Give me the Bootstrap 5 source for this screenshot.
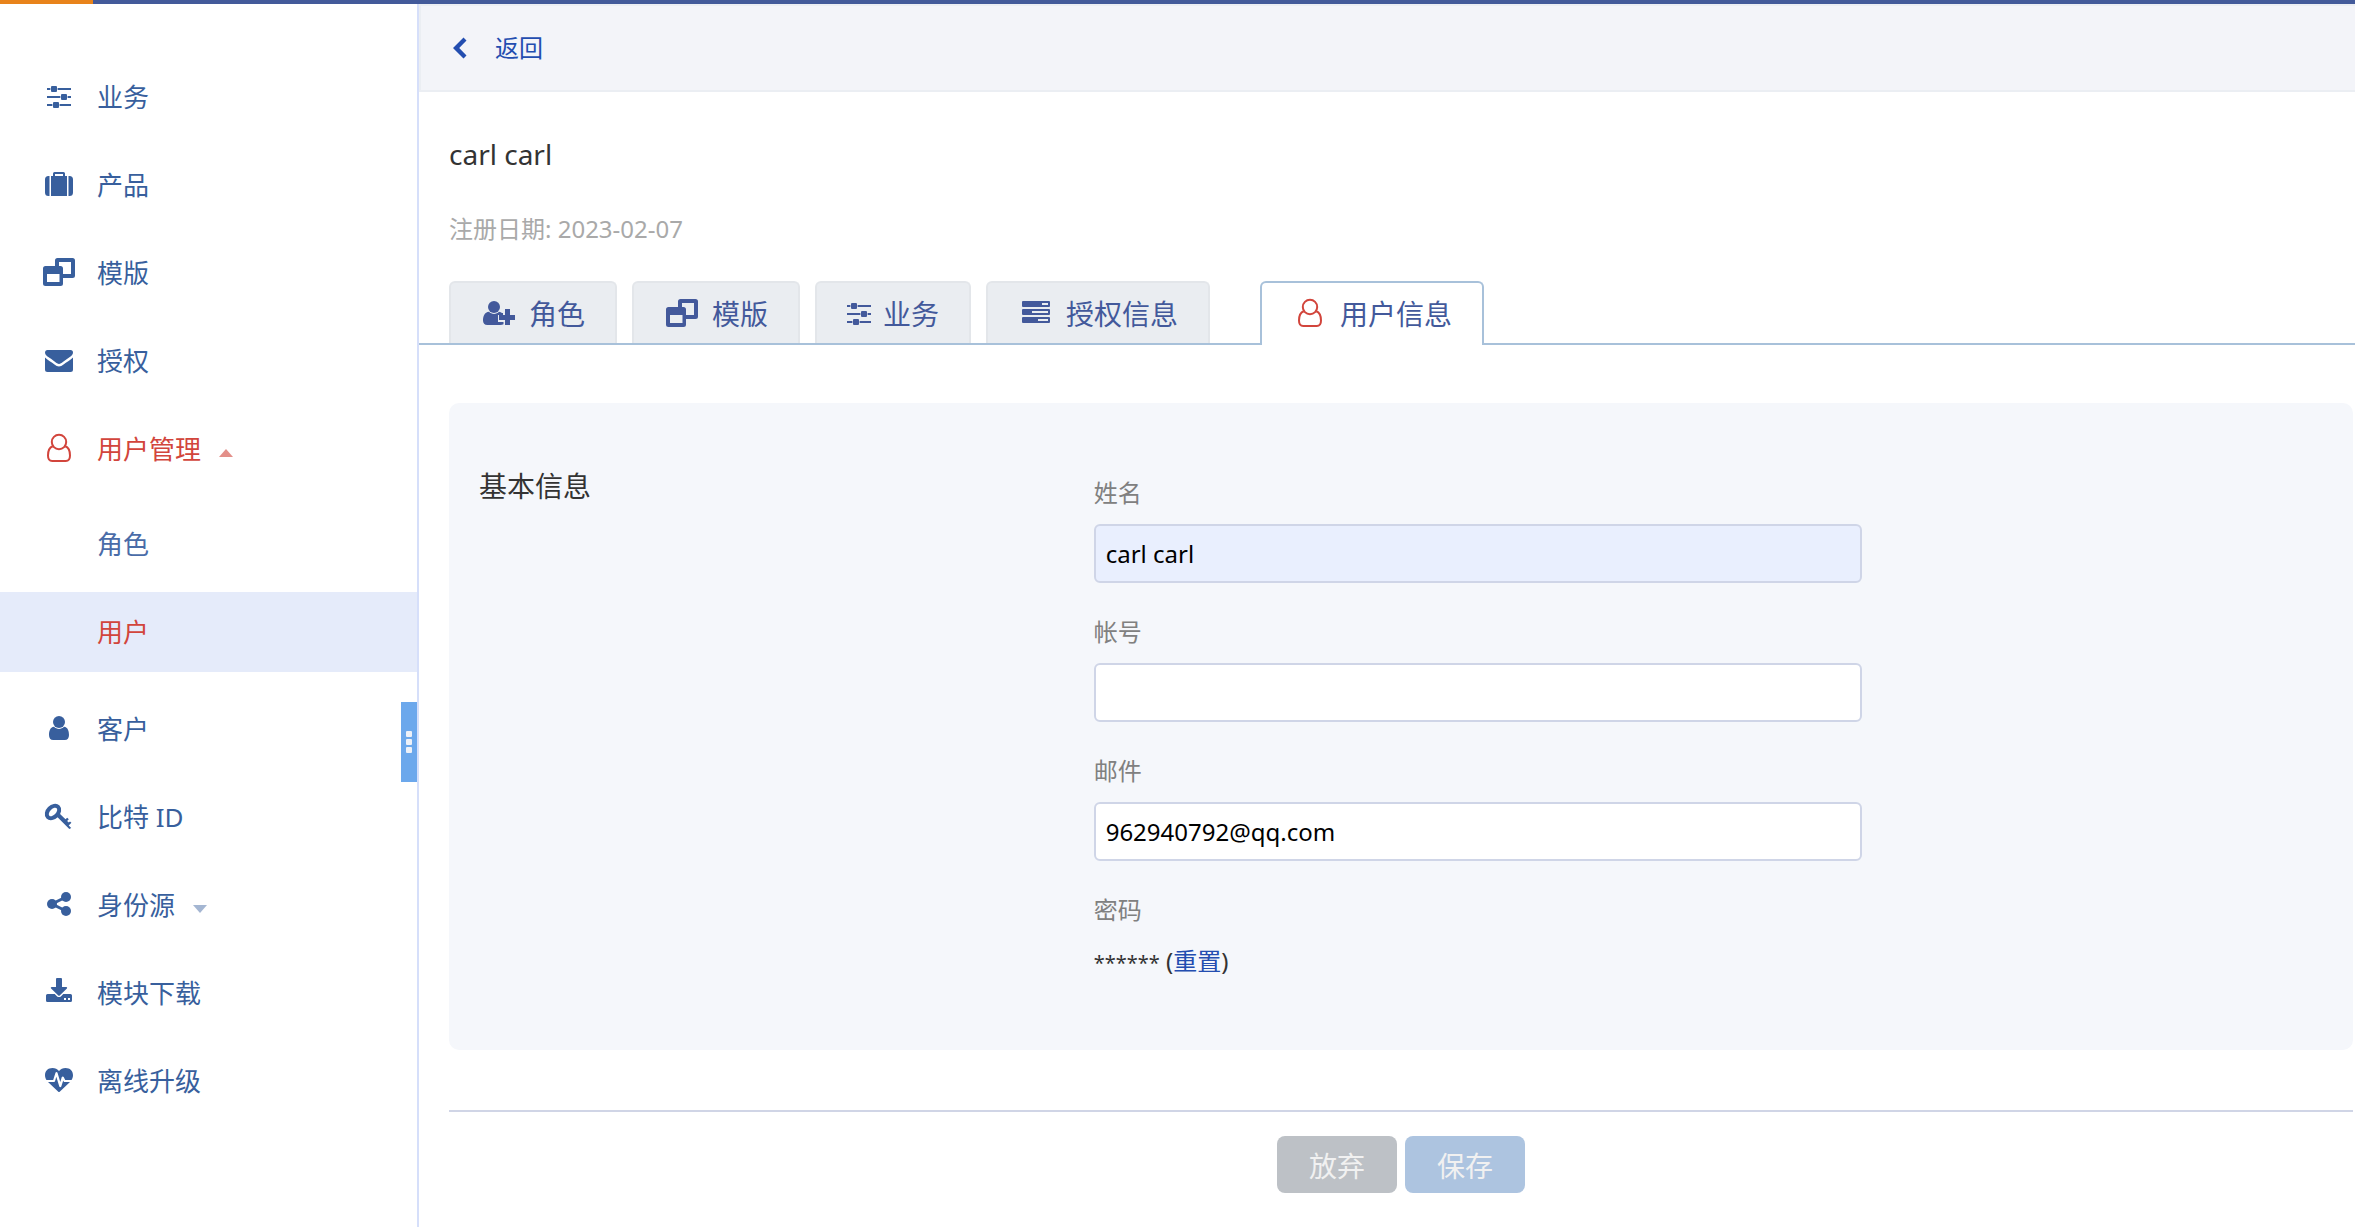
<!DOCTYPE html>
<html lang="zh-CN">
<head>
<meta charset="utf-8">
<meta name="viewport" content="width=device-width, initial-scale=1">
<title>用户信息</title>
<link href="https://cdn.jsdelivr.net/npm/bootstrap@5.3.0/dist/css/bootstrap.min.css" rel="stylesheet">
<style>
  body { font-family: "Noto Sans", "Noto Sans CJK SC", sans-serif; font-size: 24px; line-height: 36px; color: #333; background: #fff; }
  a { text-decoration: none; }
  svg.ico { width: 32px; height: 28px; flex: none; overflow: visible; fill: currentColor; display: block; }

  .top-strip { height: 4px; background: #435a9a; }
  .top-strip span { width: 93px; background: #e8831b; }

  .side { width: 419px; flex: none; border-right: 2px solid #d6dffa; padding-top: 53px; }
  .side .nav-link { height: 80px; margin-bottom: 8px; padding: 0 43px; gap: 22px; font-size: 26px; line-height: 40px; color: #385f9d; border-radius: 0; }
  .side .sub { padding: 7px 0 9px; }
  .side .sub .nav-link { padding-left: 97px; color: #4a6ca8; }
  .side .sub .nav-link.picked { background: #e5ebfa; color: #d2453c; }
  .side .nav-link.opened { color: #d2453c; }
  .caret { width: 14px; height: 8px; opacity: .6; fill: currentColor; margin-top: 8px; margin-left: -4px; }
  .caret.faint { opacity: .45; }
  .grip { top: 698px; right: 0; width: 16px; height: 80px; padding: 0; border: 0; background: #6ca8ec; gap: 2px; }
  .grip i { width: 6px; height: 6px; border-radius: 1px; background: #eef1f8; }

  .back-bar { height: 88px; border: 2px solid #ebeef3; border-right: 0; background: #f3f4f9; padding-left: 26px; }
  .back-bar a { color: #234db0; gap: 16px; }
  .person { padding: 41px 30px 34px; }
  .person h1 { font-size: 28px; line-height: 42px; font-weight: 400; margin-bottom: 36px; }
  .person p { color: #a9a9a9; }

  .sections { border-bottom: 2px solid #a8c1da; padding: 0 30px; gap: 15px; }
  .sections .nav-link { height: 62px; border: 2px solid #e3e6ea; border-bottom: 0; border-radius: 6px 6px 0 0; margin: 0; background: #eaedf1; color: #43599b; font-size: 28px; line-height: 42px; padding: 2px 30px 0; gap: 12px; }
  .sections .nav-link.active { height: 64px; margin-bottom: -2px; border-color: #a8c1da; background: #fff; color: #43599b; padding-bottom: 2px; }
  .sections .current { margin-left: 35px; }
  .sections .current .slot { color: #d2453c; }
  .slot { width: 36px; flex: none; }
  .slot.narrow { width: 24px; }

  .pane { margin: 58px 2px 0 30px; }
  .info { background: #f5f7fb; border-radius: 10px; padding: 62px 30px 69px; }
  .info h2 { font-size: 28px; line-height: 42px; font-weight: 400; margin: 0; }
  .fields { padding-top: 10px; }
  .fields .form-label { display: block; margin: 0 0 13px; padding: 0; color: #808080; font-size: 24px; line-height: 36px; }
  .fields .form-control { height: 59px; margin-bottom: 31px; padding: 0 10px; border: 2px solid #cfd5e7; border-radius: 6px; font-size: 24px; color: #000; background: #fff; }
  .fields .form-control.filled { background: #e9effe; }
  .secret { height: 40px; line-height: 40px; }
  .secret span { font-size: 20px; line-height: 30px; }
  .secret a { color: #234db0; }
  .actions { margin-top: 60px; border-top: 2px solid #d0d5e6; padding: 24px 0 30px; gap: 8px; }
  .actions .btn { width: 120px; height: 57px; padding: 2px 0 0; border: 0; border-radius: 8px; font-size: 28px; line-height: 42px; }
  .actions .btn:disabled { opacity: 1; color: #f1f1f1; background: #bdc1c6; }
  .actions .btn.save:disabled { background: #adc4e0; }
</style>
<script src="https://cdn.jsdelivr.net/npm/bootstrap@5.3.0/dist/js/bootstrap.bundle.min.js"></script>
</head>
<body class="d-flex flex-column min-vh-100">

<svg class="d-none" aria-hidden="true">
  <symbol id="i-sliders" viewBox="0 0 32 28" overflow="visible">
    <path d="M4 5h3.400v2H4zM14.600 5H28v2H14.600zM4 13h13.400v2H4zM24.600 13H28v2h-3.400zM4 21h5.400v2H4zM16.600 21H28v2H16.600z"/>
    <rect x="8" y="3" width="6" height="6" rx="1"/><rect x="18" y="11" width="6" height="6" rx="1"/><rect x="10" y="19" width="6" height="6" rx="1"/>
  </symbol>
  <symbol id="i-case" viewBox="0 0 32 28" overflow="visible">
    <path fill-rule="evenodd" d="M8 5h2V2.500A1.500 1.500 0 0 1 11.500 1h9A1.500 1.500 0 0 1 22 2.500V5h2v20H8zM12 5h8V3h-8z"/>
    <path d="M6.500 5v20h-1A3.500 3.500 0 0 1 2 21.500v-13A3.500 3.500 0 0 1 5.500 5zM25.500 5h1A3.500 3.500 0 0 1 30 8.500v13a3.500 3.500 0 0 1-3.500 3.500h-1z"/>
  </symbol>
  <symbol id="i-windows" viewBox="0 0 32 28" overflow="visible">
    <path fill-rule="evenodd" d="M2.500 7h15A2.500 2.500 0 0 1 20 9.500v15a2.500 2.500 0 0 1-2.500 2.500h-15A2.500 2.500 0 0 1 0 24.500v-15A2.500 2.500 0 0 1 2.500 7zM4 15v8h12.500v-8z"/>
    <path d="M12 7V1.500A2.500 2.500 0 0 1 14.500-1h15A2.500 2.500 0 0 1 32 1.500v15a2.500 2.500 0 0 1-2.500 2.500H20v-4h8V3H16v4z"/>
  </symbol>
  <symbol id="i-mail" viewBox="0 0 32 28" overflow="visible">
    <path d="M2 10.500c3 2.600 6.500 4.800 9.500 7 1.400 1.100 3 2 4.500 2s3.100-.9 4.500-2c3-2.200 6.500-4.400 9.500-7v12a2.500 2.500 0 0 1-2.500 2.500h-23A2.500 2.500 0 0 1 2 22.500z"/>
    <path d="M4.500 3h23A2.500 2.500 0 0 1 30 5.500c0 1.700-1.200 3.100-2.500 4-2.600 1.800-5.200 3.600-7.700 5.400-1.100.8-2.600 2-3.800 2s-2.700-1.200-3.800-2C9.700 13.100 7 11.300 4.500 9.600 3.500 8.900 2 7.200 2 5.800 2 4.200 2.900 3 4.500 3z"/>
  </symbol>
  <symbol id="i-user-o" viewBox="0 0 32 28" overflow="visible">
    <g fill="none" stroke="currentColor" stroke-width="2"><circle cx="16" cy="7" r="7.200"/>
    <path d="M9.800 11.200C6 12.500 5 16.500 5 20.500 5 24.300 6.600 26 9.200 26h13.600c2.600 0 4.200-1.700 4.200-5.500 0-4-1-8-4.800-9.300"/></g>
  </symbol>
  <symbol id="i-user" viewBox="0 0 32 28" overflow="visible">
    <circle cx="16" cy="7" r="6"/>
    <path d="M11 11.700c1.400 1.400 3 2.200 5 2.200s3.600-.8 5-2.200c4 .3 5 4.800 5 8.300 0 3-1.500 5-4.200 5H10.200C7.500 25 6 23 6 20c0-3.500 1-8 5-8.300z"/>
  </symbol>
  <symbol id="i-key" viewBox="0 0 32 28" overflow="visible">
    <ellipse cx="10" cy="9" rx="7.200" ry="5" transform="rotate(-45 10 9)" fill="none" stroke="currentColor" stroke-width="4"/>
    <path d="M12.800 12.600L16 10l6.500 6.300 1.700-1.600 1.600 1.500-1.700 1.700 1.700 1.700 1.200-1.200 1.400 1.400-2.700 2.800 2.500 2.300L26.300 26z"/>
  </symbol>
  <symbol id="i-share" viewBox="0 0 32 28" overflow="visible">
    <path d="M23 6L9 13l14 7" fill="none" stroke="currentColor" stroke-width="3"/>
    <circle cx="9" cy="13" r="5"/><circle cx="23" cy="6" r="5"/><circle cx="23" cy="20" r="5"/>
  </symbol>
  <symbol id="i-download" viewBox="0 0 32 28" overflow="visible">
    <path d="M14-1h4a1 1 0 0 1 1 1v8h4.300c.8 0 1.100.8.600 1.400l-7.200 7a1 1 0 0 1-1.400 0l-7.200-7C7.500 8.800 7.900 8 8.700 8H13V0a1 1 0 0 1 1-1z"/>
    <path fill-rule="evenodd" d="M4.500 15h7.200l2.200 2.200c1.200 1.200 3 1.200 4.200 0l2.200-2.200h7.200A1.500 1.500 0 0 1 29 16.500v5a1.500 1.500 0 0 1-1.500 1.500h-23A1.500 1.500 0 0 1 3 21.500v-5A1.500 1.500 0 0 1 4.500 15zM21 19v2h2v-2zM25 19v2h2v-2z"/>
  </symbol>
  <symbol id="i-heart" viewBox="0 0 32 28" overflow="visible">
    <path d="M16 4c1.600-1.800 3.800-3 6.500-3C27 1 30 3.800 30 8.200c0 1.700-.6 3.400-1.500 4.800h-6.300l-1.500-3c-.4-.8-1.600-.7-1.900.1L17.300 15 14.500 5.700c-.3-1-1.700-1-2 0L10.200 13H3.500C2.600 11.600 2 9.900 2 8.200 2 3.800 5 1 9.500 1 12.200 1 14.400 2.200 16 4z"/>
    <path d="M5 15h6c.5 0 .9-.3 1-.8l1.300-4.400 3 9.800c.3 1 1.700 1 2 0l1.900-6.200.5 1c.2.400.5.600.9.600H27L16.700 24.700a1 1 0 0 1-1.400 0z"/>
  </symbol>
  <symbol id="i-user-plus" viewBox="0 0 32 28" overflow="visible">
    <circle cx="11" cy="7" r="6"/>
    <path d="M6 11.700c1.400 1.400 3 2.200 5 2.200s3.600-.8 5-2.200c1.300.1 2.300.6 3 1.300h1v2h-5v7h5.500v2.300c-.9.500-2 .7-3.100.7H4.400C1.500 25 0 23.200 0 20.500c0-4 1.500-8.500 6-8.800z"/>
    <path d="M22 9h5v6h5v5h-5v5h-5v-5h-6v-5h6z"/>
  </symbol>
  <symbol id="i-tasks" viewBox="0 0 32 28" overflow="visible">
    <path fill-rule="evenodd" d="M3 1h26a1 1 0 0 1 1 1v4a1 1 0 0 1-1 1H3a1 1 0 0 1-1-1V2a1 1 0 0 1 1-1zM22 3v2h6V3zM3 9h26a1 1 0 0 1 1 1v4a1 1 0 0 1-1 1H3a1 1 0 0 1-1-1v-4a1 1 0 0 1 1-1zM12 11v2h16v-2zM3 17h26a1 1 0 0 1 1 1v4a1 1 0 0 1-1 1H3a1 1 0 0 1-1-1v-4a1 1 0 0 1 1-1zM18 19v2h10v-2z"/>
  </symbol>
</svg>

<div class="top-strip d-flex"><span></span></div>

<div class="d-flex flex-grow-1">
  <aside class="side position-relative">
    <nav class="nav flex-column">
      <a href="#" class="nav-link d-flex align-items-center"><svg class="ico"><use href="#i-sliders"/></svg>业务</a>
      <a href="#" class="nav-link d-flex align-items-center"><svg class="ico"><use href="#i-case"/></svg>产品</a>
      <a href="#" class="nav-link d-flex align-items-center"><svg class="ico"><use href="#i-windows"/></svg>模版</a>
      <a href="#" class="nav-link d-flex align-items-center"><svg class="ico"><use href="#i-mail"/></svg>授权</a>
      <a href="#" class="nav-link d-flex align-items-center opened"><svg class="ico"><use href="#i-user-o"/></svg>用户管理<svg class="caret" viewBox="0 0 14 8"><path d="M0 8L7 0l7 8z"/></svg></a>
      <div class="sub">
        <a href="#" class="nav-link d-flex align-items-center">角色</a>
        <a href="#" class="nav-link d-flex align-items-center picked" aria-current="page">用户</a>
      </div>
      <a href="#" class="nav-link d-flex align-items-center"><svg class="ico"><use href="#i-user"/></svg>客户</a>
      <a href="#" class="nav-link d-flex align-items-center"><svg class="ico"><use href="#i-key"/></svg>比特 ID</a>
      <a href="#" class="nav-link d-flex align-items-center"><svg class="ico"><use href="#i-share"/></svg>身份源<svg class="caret faint" viewBox="0 0 14 8"><path d="M0 0h14L7 8z"/></svg></a>
      <a href="#" class="nav-link d-flex align-items-center"><svg class="ico"><use href="#i-download"/></svg>模块下载</a>
      <a href="#" class="nav-link d-flex align-items-center"><svg class="ico"><use href="#i-heart"/></svg>离线升级</a>
    </nav>
    <button type="button" class="grip position-absolute d-flex flex-column align-items-center justify-content-center" aria-label="收起"><i></i><i></i><i></i></button>
  </aside>

  <main class="flex-grow-1">
    <div class="back-bar d-flex align-items-center">
      <a href="#" class="d-flex align-items-center"><svg class="ico" viewBox="0 0 32 28"><path d="M16.500 3.500l3 3L12.200 14l7.300 7.500-3 3L6 14z"/></svg>返回</a>
    </div>

    <header class="person">
      <h1>carl carl</h1>
      <p class="m-0">注册日期: 2023-02-07</p>
    </header>

    <nav class="nav sections">
      <a href="#" class="nav-link d-flex align-items-center"><span class="slot d-flex justify-content-center"><svg class="ico"><use href="#i-user-plus"/></svg></span>角色</a>
      <a href="#" class="nav-link d-flex align-items-center"><span class="slot d-flex justify-content-center"><svg class="ico"><use href="#i-windows"/></svg></span>模版</a>
      <a href="#" class="nav-link d-flex align-items-center"><span class="slot narrow d-flex justify-content-center"><svg class="ico"><use href="#i-sliders"/></svg></span>业务</a>
      <a href="#" class="nav-link d-flex align-items-center"><span class="slot d-flex justify-content-center"><svg class="ico"><use href="#i-tasks"/></svg></span>授权信息</a>
      <a href="#" class="nav-link d-flex align-items-center active current" aria-current="page"><span class="slot d-flex justify-content-center"><svg class="ico"><use href="#i-user-o"/></svg></span>用户信息</a>
    </nav>

    <form class="pane">
      <section class="info">
        <div class="row g-0">
          <div class="col-4"><h2>基本信息</h2></div>
          <div class="col-5 fields">
            <label class="form-label" for="f-name">姓名</label>
            <input class="form-control filled" id="f-name" type="text" value="carl carl">
            <label class="form-label" for="f-account">帐号</label>
            <input class="form-control" id="f-account" type="text">
            <label class="form-label" for="f-mail">邮件</label>
            <input class="form-control" id="f-mail" type="email" value="962940792@qq.com">
            <div class="form-label">密码</div>
            <div class="secret"><span>******</span> (<a href="#">重置</a>)</div>
          </div>
        </div>
      </section>
      <div class="actions d-flex justify-content-center">
        <button type="button" class="btn" disabled>放弃</button>
        <button type="submit" class="btn save" disabled>保存</button>
      </div>
    </form>
  </main>
</div>
</body>
</html>
